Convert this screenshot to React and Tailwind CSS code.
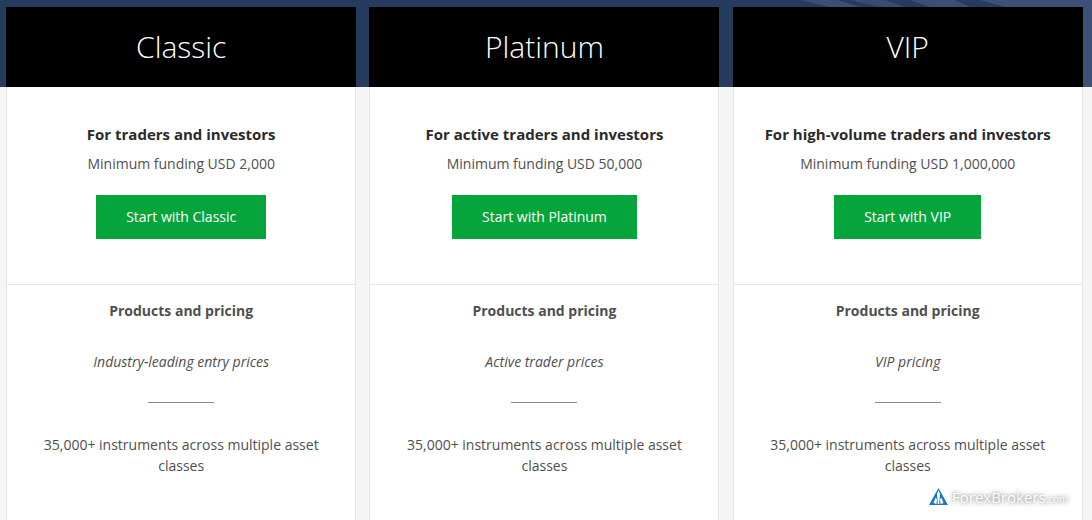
const plans = [
  { name: 'Classic', audience: 'For traders and investors', funding: 'Minimum funding USD 2,000', button: 'w-[170px]', pricing: 'Industry-leading entry prices' },
  { name: 'Platinum', audience: 'For active traders and investors', funding: 'Minimum funding USD 50,000', button: 'w-[185px]', pricing: 'Active trader prices' },
  { name: 'VIP', audience: 'For high-volume traders and investors', funding: 'Minimum funding USD 1,000,000', button: 'w-[147px]', pricing: 'VIP pricing' },
];

const PlanCard = ({ plan }) => (
  <div className="w-[350px] shrink-0">
    <div className="h-[80px] bg-black flex items-center justify-center">
      <h2 className="text-[30px] font-light text-white leading-none">{plan.name}</h2>
    </div>
    <div className="bg-white border-x border-[#e6e6e6] h-[433px]">
      <div className="h-[198px] border-b border-[#e6e6e6] flex flex-col items-center">
        <h3 className="mt-[35px] text-[15px] leading-[24px] font-bold text-[#2a2a2a]">{plan.audience}</h3>
        <p className="mt-[6px] text-[14px] leading-[24px] text-[#4f4f4f]">{plan.funding}</p>
        <button className={`mt-[19px] h-[44px] ${plan.button} bg-[#06a53b] text-white text-[14px] pb-px`}>
          Start with {plan.name}
        </button>
      </div>
      <div className="flex flex-col items-center text-[14px] text-[#4f4f4f]">
        <h4 className="mt-[14px] leading-[24px] font-bold">Products and pricing</h4>
        <p className="mt-[27px] leading-[24px] italic">{plan.pricing}</p>
        <div className="mt-[28px] w-[66px] h-px bg-[#8a8a8a]"></div>
        <p className="mt-[31px] px-[30px] leading-[21px] text-center">35,000+ instruments across multiple asset classes</p>
      </div>
    </div>
  </div>
);

const App = () => {
  return (
    <div className="relative h-[520px] overflow-hidden font-['Open_Sans',sans-serif] bg-[linear-gradient(#263c5e_0,#263c5e_87px,#f5f5f5_87px)]">
      {/* streaks in the band background */}
      <svg className="absolute top-0 left-[780px]" width="312" height="87" viewBox="0 0 312 87" fill="#41587c">
        <path d="M20 0 L58 0 L80 7 L50 7 Z" opacity="0.7" />
        <path d="M70 0 L105 0 L125 7 L100 7 Z" opacity="0.6" />
        <path d="M130 0 L175 0 L190 7 L150 7 Z" opacity="0.7" />
        <path d="M200 0 L312 0 L312 7 L225 7 Z" opacity="0.8" />
        <path d="M303 7 L312 7 L312 87 L303 87 Z" opacity="0.8" />
      </svg>

      <div className="relative flex pl-[6.2px] pt-[7px] gap-[13.28px]">
        {plans.map((plan) => (
          <PlanCard key={plan.name} plan={plan} />
        ))}
      </div>

      {/* watermark */}
      <div className="absolute left-[929px] top-[488px] flex items-center gap-[4px] text-white [text-shadow:0_0_5px_rgba(0,0,0,0.55),0_0_2px_rgba(0,0,0,0.2)]">
        <svg width="19" height="18" viewBox="0 0 19 18">
          <path d="M9.5 0 L19 17 L0 17 Z" fill="#1c78bd" />
          <path d="M9.5 2 L11 6 L10.2 16 L8.8 16 L8 6 Z M4.5 15 L6.5 10 L8 11 L7.5 16 Z M14.5 15 L12.5 10 L11 11 L11.5 16 Z" fill="#ffffff" />
        </svg>
        <span className="text-[15px] leading-none whitespace-nowrap">ForexBrokers<span className="text-[10px]">.com</span></span>
      </div>
    </div>
  );
};

export default App;
